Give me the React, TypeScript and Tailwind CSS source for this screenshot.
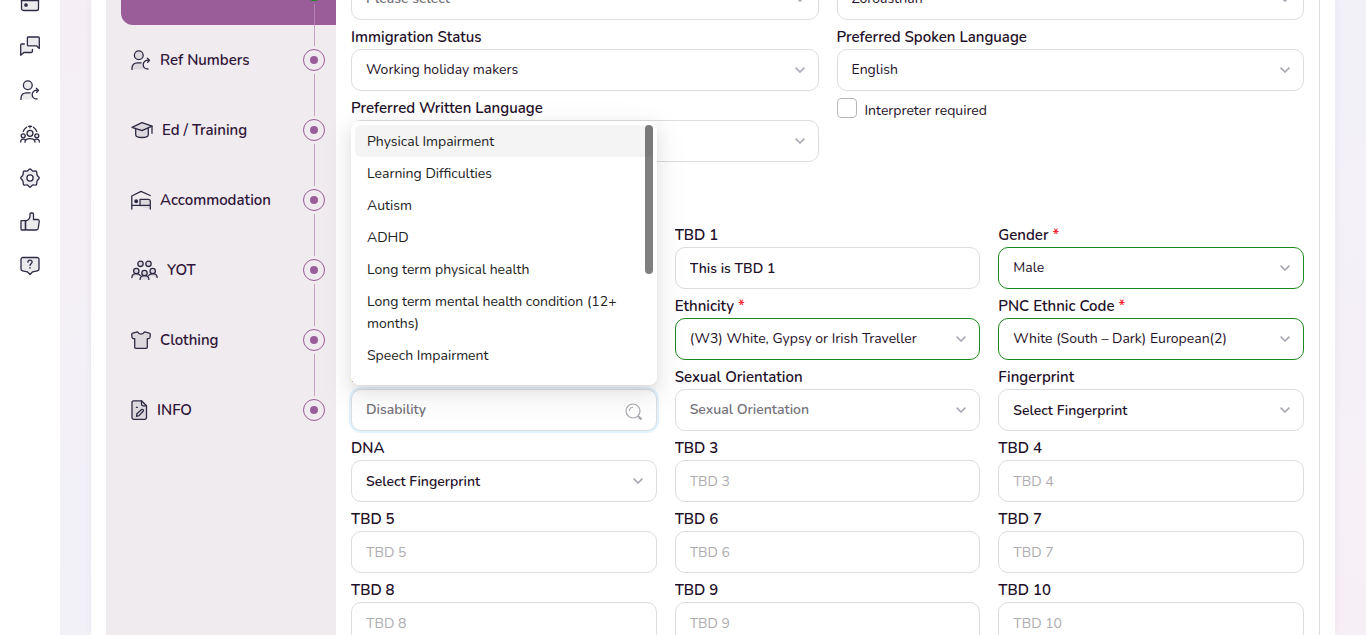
import React from 'react';

type IconProps = { className?: string };

const ink = {
  fill: 'none',
  stroke: '#2d2a44',
  strokeWidth: 1.3,
  strokeLinecap: 'round' as const,
  strokeLinejoin: 'round' as const,
};
const soft = '#2d2a4418';

function CalendarIcon({ className = 'h-5 w-5' }: IconProps) {
  return (
    <svg viewBox="0 0 20 20" className={className} {...ink} aria-hidden="true">
      <rect x="1.5" y="1.5" width="17" height="17" rx="2" fill={soft} />
      <path d="M1.5 8.5h17" />
      <path d="M2 2h16v6H2z" fill="#2d2a4440" stroke="none" />
      <circle cx="6" cy="13" r="1.2" fill="#2d2a44" />
    </svg>
  );
}

function ChatIcon({ className = 'h-5 w-5' }: IconProps) {
  return (
    <svg viewBox="0 0 20 20" className={className} {...ink} aria-hidden="true">
      <path d="M8 1h10.3a1 1 0 0 1 1 1v10.5L16.500 9.800H8.200a.8.8 0 0 1-.8-.8V1.600A.6.6 0 0 1 8 1z" fill={soft} />
      <path d="M4.300 8H1.700a1 1 0 0 0-1 1v10.300l3.200-2.800h7.300a1.200 1.200 0 0 0 1.200-1.200v-2" fill={soft} />
    </svg>
  );
}

function UserReturnIcon({ className = 'h-5 w-5' }: IconProps) {
  return (
    <svg viewBox="0 0 20 20" className={className} {...ink} aria-hidden="true">
      <circle cx="7.800" cy="5.300" r="4.400" fill={soft} />
      <path d="M1 19.400v-1.400c0-3.200 2.200-5.200 5.200-5.200h3.900" />
      <path d="M1 19.400v-1.400c0-3.200 2.200-5.200 5.200-5.200H12v6.600z" fill={soft} stroke="none" />
      <path d="M17 19c-3 0-4.800-1.700-4.800-4.300 0-2.500 1.800-4.500 5.300-4.500" />
      <path d="M16.300 8.300l2.200 1.900L16.700 12.200" />
    </svg>
  );
}

function TeamNetworkIcon({ className = 'h-5 w-5' }: IconProps) {
  return (
    <svg viewBox="0 0 20 20" className={className} {...ink} aria-hidden="true">
      <path d="M3.200 7.500A8 8 0 0 1 6.600 3.300M16.800 7.500a8 8 0 0 0-3.400-4.200M8.400 2.300a8 8 0 0 1 3.200 0M10 2v1.800" />
      <circle cx="10" cy="9.300" r="3" fill={soft} />
      <circle cx="3.200" cy="11.800" r="2" fill={soft} />
      <circle cx="16.800" cy="11.800" r="2" fill={soft} />
      <path d="M5 18.200c0-2.400 1.600-3.600 5-3.600s5 1.200 5 3.600" />
      <path d="M.7 18c0-2 .6-2.800 2.500-2.800 1 0 1.600.3 2.200.8M19.300 18c0-2-.6-2.800-2.500-2.800-1 0-1.600.3-2.200.8" />
    </svg>
  );
}

function GearIcon({ className = 'h-5 w-5' }: IconProps) {
  return (
    <svg viewBox="0 0 20 20" className={className} {...ink} aria-hidden="true">
      <path
        d="M9.200 1.300Q10 .6 10.800 1.300L12.400 2.900Q13 3.300 13.700 3.100L15.500 2.900Q16.500 2.900 16.700 3.900L16.900 6.200Q17 6.900 17.300 7.500L18.900 9.200Q19.500 10 18.900 10.800L17.300 12.500Q17 13.100 16.900 13.800L16.700 16.100Q16.500 17.100 15.500 17.100L13.700 16.900Q13 16.700 12.400 17.100L10.800 18.700Q10 19.400 9.200 18.700L7.600 17.100Q7 16.700 6.300 16.900L4.500 17.100Q3.500 17.100 3.300 16.100L3.100 13.800Q3 13.100 2.700 12.500L1.100 10.800Q.5 10 1.100 9.200L2.700 7.500Q3 6.900 3.100 6.200L3.300 3.900Q3.500 2.900 4.500 2.900L6.300 3.100Q7 3.300 7.600 2.900z"
        fill={soft}
      />
      <circle cx="10" cy="10" r="3.100" fill="#fff" />
    </svg>
  );
}

function ThumbIcon({ className = 'h-5 w-5' }: IconProps) {
  return (
    <svg viewBox="0 0 20 20" className={className} {...ink} aria-hidden="true">
      <path d="M1 8.600h4.500V18H2a1 1 0 0 1-1-1z" fill={soft} />
      <path
        d="M5.500 9c3.200-.7 4.500-2.600 4.500-5.500V2c0-.6.400-1 1-1h1.300c.7 0 1.200.5 1.200 1.200V7.500h4c1.100 0 1.900.9 1.700 2l-.9 6.500c-.2 1.200-1 2-2.200 2H7.500c-.8 0-1.400-.2-2-.6z"
        fill={soft}
      />
    </svg>
  );
}

function HelpIcon({ className = 'h-5 w-5' }: IconProps) {
  return (
    <svg viewBox="0 0 20 20" className={className} {...ink} aria-hidden="true">
      <path
        d="M3 1.500h14c1.200 0 2.200 1 2 2.200V13c0 1-.6 1.700-1.600 1.900l-4.700.9L10 18.500l-2.700-2.700-4.700-.9C1.600 14.700 1 14 1 13V3.700C.8 2.500 1.800 1.500 3 1.500z"
        fill={soft}
      />
      <path d="M7.900 6.200c0-1.200.9-2 2.100-2s2.100.8 2.100 1.900c0 1.500-2.100 1.600-2.100 3.300" />
      <path d="M10 11.800v.2" strokeWidth={1.500} />
    </svg>
  );
}

function GraduationIcon() {
  return (
    <svg viewBox="0 0 22 20" className="h-5 w-[22px]" {...ink} aria-hidden="true">
      <path d="M1 7.300L11 2.700l10 3.500-10 4.500z" fill={soft} />
      <path d="M4.700 9v5.700c0 1.700 3 2.800 6.300 2.800s6.300-1.100 6.300-2.800V8.500" fill={soft} />
      <path d="M21 6.300v7" />
    </svg>
  );
}

function BedIcon() {
  return (
    <svg viewBox="0 0 20 20" className="h-5 w-5" {...ink} aria-hidden="true">
      <path d="M.8 19V6L10 1.400 19.200 5.500" />
      <path d="M1 15.300h18.300V19M9 15V9.300h8.300c1.100 0 2 .8 2 2V15" fill={soft} />
      <circle cx="5.200" cy="11.300" r="1.300" fill="#2d2a44" />
    </svg>
  );
}

function GroupIcon() {
  return (
    <svg viewBox="0 0 27 20" className="h-5 w-[27px]" {...ink} aria-hidden="true">
      <circle cx="9.500" cy="3.800" r="2.700" fill={soft} />
      <circle cx="17.500" cy="3.800" r="2.700" fill={soft} />
      <circle cx="5.300" cy="11" r="2.700" fill={soft} />
      <circle cx="21.700" cy="11" r="2.700" fill={soft} />
      <circle cx="13.500" cy="13" r="2.700" fill={soft} />
      <path
        d="M.9 17.500c0-2.600 1.500-3.900 4.400-3.900 2 0 3.300.7 4 1.900M26.100 17.500c0-2.600-1.500-3.900-4.400-3.900-2 0-3.300.7-4 1.900M9.100 19.400c0-2.500 1.500-3.700 4.400-3.700s4.400 1.200 4.400 3.700"
        fill={soft}
      />
    </svg>
  );
}

function ShirtIcon() {
  return (
    <svg viewBox="0 0 20 20" className="h-5 w-5" {...ink} aria-hidden="true">
      <path
        d="M6.500 1.800c.8 1.700 2 2.400 3.500 2.400s2.700-.7 3.500-2.400l4.800 1.400c.7.200 1.100.8 1 1.500l-.4 3c-.1.600-.5.900-1.100.9h-1.500v8.600c0 .7-.4 1.100-1.100 1.100H4.800c-.7 0-1.100-.4-1.100-1.100V8.600H2.200c-.6 0-1-.3-1.100-.9l-.4-3c-.1-.7.300-1.300 1-1.500z"
        fill={soft}
      />
    </svg>
  );
}

function NoteIcon() {
  return (
    <svg viewBox="0 0 17 20" className="h-5 w-[17px]" {...ink} aria-hidden="true">
      <path
        d="M2.800.8h7.700l5 5v11.700a1.800 1.800 0 0 1-1.800 1.800H2.800A1.800 1.800 0 0 1 1 17.500V2.600A1.800 1.800 0 0 1 2.800.8z"
        fill={soft}
      />
      <path d="M10.500.8V4.300c0 .8.700 1.500 1.500 1.500h3.500" />
      <path d="M5.500 16.300l.4-2.500 4.800-4.200c1-.8 2.400.7 1.500 1.700L8 15.600z" />
      <path d="M5.400 7.300h1" />
    </svg>
  );
}

function SearchIcon() {
  return (
    <svg viewBox="0 0 18 18" className="h-[18px] w-[18px]" fill="none" stroke="#a9a6ad" aria-hidden="true">
      <circle cx="8" cy="8" r="7" strokeWidth="1.200" />
      <path d="M4.300 8A3.700 3.700 0 0 1 8 4.200" strokeWidth="1" />
      <path d="M13 13l1 1" strokeWidth="1.200" />
      <path d="M13.800 13.800l2.700 2.700" strokeWidth="2.400" />
    </svg>
  );
}

function Chevron() {
  return (
    <svg
      viewBox="0 0 10 6"
      className="pointer-events-none absolute right-3.5 top-[18px] h-1.5 w-2.5"
      fill="none"
      stroke="#a8a8b4"
      strokeWidth="1.600"
      aria-hidden="true"
    >
      <path d="M.6.6L5 5 9.400.6" />
    </svg>
  );
}

function Caption({ htmlFor, text, required }: { htmlFor: string; text: string; required?: boolean }) {
  return (
    <label htmlFor={htmlFor} className="block h-6 truncate text-[15px] font-semibold leading-6 text-[#1f1029]">
      {text}
      {required && <span className="text-[#f5222d]"> *</span>}
    </label>
  );
}

type SelectFieldProps = {
  id: string;
  label: string;
  value: string;
  tone?: 'value' | 'placeholder' | 'strong';
  required?: boolean;
  className?: string;
};

const tones = {
  value: 'font-normal text-[#1f1029]',
  placeholder: 'font-semibold text-[#75727a]',
  strong: 'pt-0.5 font-semibold text-[#1f1029]',
};

function SelectField({ id, label, value, tone = 'value', required, className = '' }: SelectFieldProps) {
  return (
    <div className={className}>
      <Caption htmlFor={id} text={label} required={required} />
      <div className="relative">
        <select
          id={id}
          defaultValue={value}
          className={`block h-[42px] w-full appearance-none rounded-[10px] border bg-white pl-3.5 pr-9 text-sm outline-none ${
            required ? 'border-[#1b8a1b]' : 'border-[#dddddf]'
          } ${tones[tone]}`}
        >
          <option>{value}</option>
        </select>
        <Chevron />
      </div>
    </div>
  );
}

function TextField({ id, label, value }: { id: string; label: string; value?: string }) {
  return (
    <div>
      <Caption htmlFor={id} text={label} />
      <input
        id={id}
        type="text"
        defaultValue={value}
        placeholder={label}
        className="block h-[42px] w-full rounded-[10px] border border-[#dddddf] bg-white px-3.5 text-sm font-semibold text-[#1f1029] outline-none placeholder:font-normal placeholder:text-[#aeacb1]"
      />
    </div>
  );
}

const disabilities = [
  'Physical Impairment',
  'Learning Difficulties',
  'Autism',
  'ADHD',
  'Long term physical health',
  'Long term mental health condition (12+ months)',
  'Speech Impairment',
];

function DisabilityField() {
  return (
    <div className="col-start-1">
      <Caption htmlFor="disability" text="Disability" />
      <div className="relative">
        <input
          id="disability"
          type="text"
          role="combobox"
          aria-expanded="true"
          aria-controls="disability-options"
          placeholder="Disability"
          className="block h-[42px] w-full rounded-[10px] border border-[#dddddf] bg-white pb-0.5 pl-3.5 pr-9 text-sm text-[#1f1029] shadow-[0_0_0_2px_rgba(5,145,255,0.12)] outline-none placeholder:font-semibold placeholder:text-[#75727a]"
        />
        <span className="pointer-events-none absolute right-3.5 top-3.5">
          <SearchIcon />
        </span>
        <div className="absolute inset-x-0 bottom-full z-10 mb-1 rounded-lg bg-white p-1 shadow-[0_6px_16px_0_rgba(0,0,0,0.08),0_3px_6px_-4px_rgba(0,0,0,0.12),0_9px_28px_8px_rgba(0,0,0,0.05)]">
          <ul id="disability-options" role="listbox" className="h-64 overflow-hidden text-sm text-[#222]">
            {disabilities.map((name, index) => (
              <li
                key={name}
                role="option"
                aria-selected={index === 0}
                className={`rounded-md px-3 pb-1 pt-1.5 leading-[22px] ${index === 0 ? 'bg-[#f4f4f4]' : ''}`}
              >
                {name}
              </li>
            ))}
          </ul>
          <div className="absolute right-1 top-1 h-[149px] w-2 rounded-full bg-black/50" />
        </div>
      </div>
    </div>
  );
}

const navItems = [
  { name: 'Calendar', Icon: CalendarIcon },
  { name: 'Messages', Icon: ChatIcon },
  { name: 'Referrals', Icon: UserReturnIcon },
  { name: 'Team', Icon: TeamNetworkIcon },
  { name: 'Settings', Icon: GearIcon },
  { name: 'Feedback', Icon: ThumbIcon },
  { name: 'Help', Icon: HelpIcon },
];

const steps = [
  { name: 'Ref Numbers', Icon: UserReturnIcon },
  { name: 'Ed / Training', Icon: GraduationIcon },
  { name: 'Accommodation', Icon: BedIcon },
  { name: 'YOT', Icon: GroupIcon },
  { name: 'Clothing', Icon: ShirtIcon },
  { name: 'INFO', Icon: NoteIcon },
];

function StepMarker({ done, last }: { done?: boolean; last?: boolean }) {
  return (
    <span className="flex h-full w-[22px] shrink-0 flex-col items-center">
      <span className={`w-px flex-1 ${done ? 'bg-transparent' : 'bg-[#c9a3c8]'}`} />
      <span
        className={`my-[3px] flex h-[22px] w-[22px] items-center justify-center rounded-full border ${
          done ? 'border-[#1b8a1b] bg-[#1b8a1b]' : 'border-[#9b5c9a]'
        }`}
      >
        <span className="h-2 w-2 rounded-full bg-[#9b5c9a]" />
      </span>
      <span className={`w-px flex-1 ${last ? 'bg-transparent' : done ? 'bg-[#b583b4]' : 'bg-[#c9a3c8]'}`} />
    </span>
  );
}

export default function App() {
  return (
    <div className="flex h-screen overflow-hidden bg-linear-to-br from-[#f5eff4] via-[#f2f1f8] to-[#f7eff6] font-['Nunito','Lato',sans-serif]">
      <nav aria-label="Main" className="w-[60px] shrink-0 bg-white">
        <ul className="-mt-5 flex flex-col">
          {navItems.map(({ name, Icon }) => (
            <li key={name}>
              <a href="#" aria-label={name} className="flex h-11 items-center justify-center">
                <Icon />
              </a>
            </li>
          ))}
        </ul>
      </nav>

      <main className="min-w-0 flex-1 px-[31px]">
        <div className="flex h-full bg-white px-[15px] shadow-[0_0_8px_rgba(60,40,90,0.06)]">
          <aside className="w-[230px] shrink-0 bg-[#f0ebef] pl-[15px]">
            <ol className="-mt-[45px]">
              <li className="flex h-[70px] justify-end rounded-bl-xl bg-[#9b5c9a] pr-[11px]">
                <StepMarker done />
              </li>
              {steps.map(({ name, Icon }, index) => (
                <li key={name}>
                  <a href="#" className="flex h-[70px] items-center pl-2.5 pr-[11px]">
                    <Icon />
                    <span className="ml-[9px] flex-1 text-[15px] font-semibold text-[#2f1538]">{name}</span>
                    <StepMarker last={index === steps.length - 1} />
                  </a>
                </li>
              ))}
            </ol>
          </aside>

          <section className="min-w-0 flex-1 border-r border-[#dddddf] px-[15px]">
            <form className="-mt-[46px]">
              <div className="grid grid-cols-2 gap-x-[18px] gap-y-[5px]">
                <SelectField id="nationality" label="Nationality" value="Please select" tone="placeholder" />
                <SelectField id="religion" label="Religion" value="Zoroastrian" />
                <SelectField id="immigration" label="Immigration Status" value="Working holiday makers" />
                <SelectField id="spoken" label="Preferred Spoken Language" value="English" />
                <SelectField id="written" label="Preferred Written Language" value="" />
                <label className="flex items-start gap-2 pt-0.5 text-sm text-[#1f1029]">
                  <input type="checkbox" className="h-5 w-5 appearance-none rounded border border-[#b8b6bb] bg-white" />
                  <span className="pt-[3px] leading-5">Interpreter required</span>
                </label>
              </div>

              <div className="mt-[61px] grid grid-cols-3 gap-x-[18px] gap-y-[5px]">
                <div className="col-start-2">
                  <TextField id="tbd1" label="TBD 1" value="This is TBD 1" />
                </div>
                <SelectField id="gender" label="Gender" value="Male" required />
                <SelectField
                  id="ethnicity"
                  label="Ethnicity"
                  value="(W3) White, Gypsy or Irish Traveller"
                  required
                  className="col-start-2"
                />
                <SelectField id="pnc" label="PNC Ethnic Code" value="White (South – Dark) European(2)" required />
                <DisabilityField />
                <SelectField id="orientation" label="Sexual Orientation" value="Sexual Orientation" tone="placeholder" />
                <SelectField id="fingerprint" label="Fingerprint" value="Select Fingerprint" tone="strong" />
                <SelectField id="dna" label="DNA" value="Select Fingerprint" tone="strong" />
                {[3, 4, 5, 6, 7, 8, 9, 10].map((n) => (
                  <TextField key={n} id={`tbd${n}`} label={`TBD ${n}`} />
                ))}
              </div>
            </form>
          </section>
        </div>
      </main>
    </div>
  );
}
